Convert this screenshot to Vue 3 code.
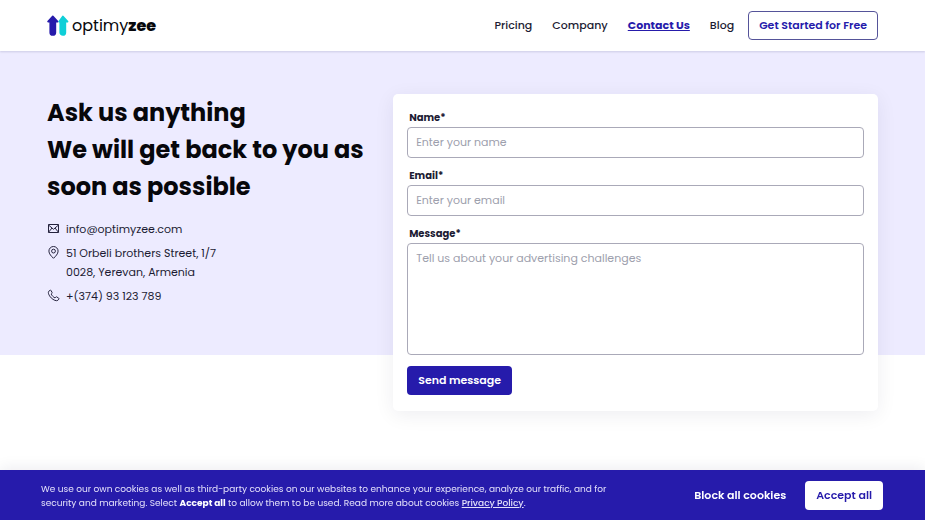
<script setup>
import { reactive, ref } from 'vue'

const links = [
  { label: 'Pricing', href: '#pricing' },
  { label: 'Company', href: '#company' },
  { label: 'Contact Us', href: '#contact', active: true },
  { label: 'Blog', href: '#blog' }
]

const form = reactive({ name: '', email: '', message: '' })
const showCookies = ref(true)
</script>

<template>
  <div class="page">
    <header class="header">
      <a class="logo" href="#home">
        <svg class="logo-mark" viewBox="0 0 22 21" aria-hidden="true">
          <path d="M5.800 1.400 10.600 6.600H8.400V17.400a2.600 2.600 0 0 1-5.200 0V6.600H1Z" fill="#261bab" stroke="#261bab" stroke-width="1.600" stroke-linejoin="round" />
          <path d="M15.800 1.400 20.600 6.600H18.400V17.400a2.600 2.600 0 0 1-5.200 0V6.600H12Z" fill="#0fcfd8" stroke="#0fcfd8" stroke-width="1.600" stroke-linejoin="round" />
        </svg>
        <span class="logo-text">optimy<b>zee</b></span>
      </a>
      <nav class="nav">
        <a v-for="link in links" :key="link.label" :href="link.href" :class="{ active: link.active }">{{ link.label }}</a>
      </nav>
      <button class="button outline" type="button">Get Started for Free</button>
    </header>

    <main class="hero">
      <section class="intro">
        <h1>Ask us anything<br />We will get back to you as soon as possible</h1>
        <ul class="contacts">
          <li>
            <svg viewBox="0 0 13 13" aria-hidden="true">
              <path d="M1.500 2.500H11.500V10.500H1.500ZM1.500 3 6.500 7.300 11.500 3M1.500 10.300 5 6M11.500 10.300 8 6" />
            </svg>
            <span>info@optimyzee.com</span>
          </li>
          <li>
            <svg viewBox="0 0 13 13" aria-hidden="true">
              <path d="M6.500 12.300C4.500 10.300 1.900 8 1.900 5.100a4.600 4.600 0 0 1 9.200 0C11.100 8 8.500 10.300 6.500 12.300Z" />
              <circle cx="6.500" cy="5.100" r="1.900" />
            </svg>
            <span>51 Orbeli brothers Street, 1/7<br />0028, Yerevan, Armenia</span>
          </li>
          <li>
            <svg viewBox="0 0 13 13" aria-hidden="true">
              <path d="M3.300 1.200 1.800 2.200C.6 3.500 2 6.700 4.200 8.900S9.500 12.400 10.900 11.300L11.900 10.100Q12.200 9.600 11.700 9.200L9.700 7.900Q9.200 7.600 8.800 8L8 8.900C6.500 8.300 4.800 6.500 4.200 5.100L5 4.400Q5.400 4 5.100 3.500L4 1.500Q3.700 1 3.300 1.200Z" />
            </svg>
            <span>+(374) 93 123 789</span>
          </li>
        </ul>
      </section>

      <form class="card" @submit.prevent>
        <div class="field">
          <label for="name">Name*</label>
          <input id="name" v-model="form.name" type="text" placeholder="Enter your name" />
        </div>
        <div class="field">
          <label for="email">Email*</label>
          <input id="email" v-model="form.email" type="email" placeholder="Enter your email" />
        </div>
        <div class="field">
          <label for="message">Message*</label>
          <textarea id="message" v-model="form.message" placeholder="Tell us about your advertising challenges"></textarea>
        </div>
        <button class="button primary" type="submit">Send message</button>
      </form>
    </main>

    <aside v-if="showCookies" class="cookies">
      <p>
        We use our own cookies as well as third-party cookies on our websites to enhance your experience, analyze our traffic, and for security and marketing. Select <b>Accept all</b> to allow them to be used. Read more about cookies <a href="#privacy">Privacy Policy</a>.
      </p>
      <div class="actions">
        <button class="button plain" type="button" @click="showCookies = false">Block all cookies</button>
        <button class="button light" type="button" @click="showCookies = false">Accept all</button>
      </div>
    </aside>
  </div>
</template>

<style>
body {
  background: #fff;
}
</style>

<style scoped>
.page,
.page * {
  box-sizing: border-box;
}

.page {
  min-height: 100vh;
  font-family: Poppins, Inter, 'Open Sans', sans-serif;
  font-size: 11px;
  color: #1c1b33;
}

.header {
  position: relative;
  display: flex;
  align-items: center;
  height: 51px;
  padding: 0 47px;
  background: #fff;
  box-shadow: 0 1px 2px rgba(30, 25, 80, 0.15);
}

.logo {
  display: flex;
  align-items: center;
  gap: 3px;
  margin-right: auto;
  color: #08080c;
  text-decoration: none;
}

.logo-mark {
  width: 22px;
  height: 21px;
}

.logo-text {
  font-size: 16px;
  line-height: 20px;
  font-weight: 400;
}

.logo-text b {
  font-weight: 800;
}

.nav {
  display: flex;
  gap: 20px;
  margin-right: 14px;
}

.nav a {
  color: #1c1b33;
  font-weight: 500;
  text-decoration: none;
}

.nav a.active {
  color: #261bab;
  font-weight: 700;
  text-decoration: underline;
}

.button {
  height: 29px;
  padding: 0 10px;
  border: 1px solid transparent;
  border-radius: 4px;
  font-family: inherit;
  font-size: 11px;
  font-weight: 600;
  white-space: nowrap;
  cursor: pointer;
}

.outline {
  border-color: #555399;
  background: #fff;
  color: #261bab;
}

.primary {
  margin-top: 3px;
  background: #261bab;
  color: #fff;
}

.plain {
  background: transparent;
  color: #fff;
}

.light {
  background: #fff;
  color: #261bab;
}

.hero {
  display: grid;
  grid-template-columns: 2fr 3fr;
  gap: 23px;
  align-items: start;
  padding: 43px 47px 0;
  background: linear-gradient(to top, #fff 56px, #edebff 56px);
}

h1 {
  margin: 0 0 15px;
  color: #07070b;
  font-size: 24px;
  line-height: 37px;
  font-weight: 700;
}

.contacts {
  display: grid;
  gap: 5px;
  margin: 0;
  padding: 0;
  list-style: none;
  line-height: 19px;
}

.contacts li {
  display: flex;
  gap: 6px;
}

.contacts svg {
  flex: none;
  width: 13px;
  height: 13px;
  margin-top: 2px;
  fill: none;
  stroke: #25233d;
  stroke-width: 1;
  stroke-linejoin: round;
}

.card {
  display: grid;
  gap: 8px;
  justify-items: start;
  padding: 14px 14px 16px;
  border-radius: 5px;
  background: #fff;
  box-shadow: 0 4px 20px rgba(20, 15, 60, 0.07);
}

.field {
  display: grid;
  width: 100%;
}

.field label {
  padding-left: 2px;
  font-size: 10px;
  line-height: 19px;
  font-weight: 700;
}

.field input,
.field textarea {
  display: block;
  width: 100%;
  height: 31px;
  padding: 0 8px;
  border: 1px solid #aaa9b8;
  border-radius: 4px;
  background: #fff;
  color: #1c1b33;
  font-family: inherit;
  font-size: 11px;
}

.field textarea {
  height: 112px;
  padding: 6px 8px;
  line-height: 17px;
  resize: none;
}

.field ::placeholder {
  color: #9da0ad;
  opacity: 1;
}

.cookies {
  position: fixed;
  right: 0;
  bottom: 0;
  left: 0;
  display: flex;
  align-items: center;
  justify-content: space-between;
  gap: 24px;
  padding: 11px 42px 10px 41px;
  background: #261bab;
  box-shadow: 0 -2px 14px rgba(20, 15, 60, 0.08);
  color: #e3e0fa;
}

.cookies p {
  max-width: 596px;
  margin: 0;
  font-size: 9px;
  line-height: 14px;
}

.cookies p b {
  color: #fff;
}

.cookies p a {
  color: inherit;
  font-weight: 500;
}

.actions {
  display: flex;
  gap: 8px;
}
</style>
